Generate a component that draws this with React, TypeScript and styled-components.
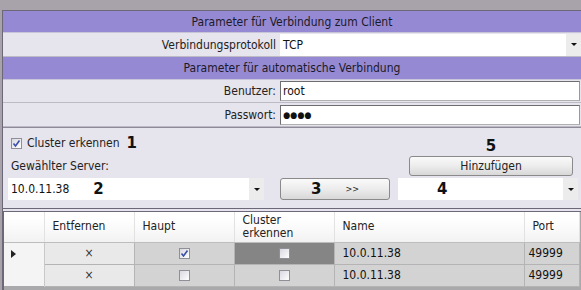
import styled, { createGlobalStyle } from "styled-components";

const GlobalStyle = createGlobalStyle`
  html, body {
    margin: 0;
    padding: 0;
    background: #a8a3ab;
  }
  body {
    font-family: "DejaVu Sans Condensed", "DejaVu Sans", sans-serif;
    font-stretch: semi-condensed;
    font-size: 12px;
    color: #1a1a1a;
  }
`;

const Page = styled.div`
  width: 581px;
  height: 290px;
  overflow: hidden;
  padding: 10px 0 0 2px;
  box-sizing: border-box;
`;

const Frame = styled.div`
  border-left: 1px solid #6c6878;
  border-top: 1px solid #6c6878;
  background: #e6e4ec;
`;

const SectionHeader = styled.div<{ h: number }>`
  height: ${(p) => p.h}px;
  background: #9589d3;
  display: flex;
  align-items: center;
  justify-content: center;
  color: #1c1a28;
  border-bottom: 1px solid #c9c5d8;
  box-sizing: border-box;
`;

const FieldRow = styled.div<{ h: number }>`
  height: ${(p) => p.h}px;
  display: grid;
  grid-template-columns: 277px 1fr;
  align-items: center;
  border-bottom: 1px solid #bdbac6;
  box-sizing: border-box;
`;

const Label = styled.div`
  text-align: right;
  padding-right: 4px;
  color: #222;
`;

const TextBox = styled.div`
  height: 20px;
  margin-right: 1px;
  background: #fff;
  border: 1px solid #6e6e6e;
  border-right-color: #9a9a9a;
  border-bottom-color: #b0b0b0;
  box-sizing: border-box;
  display: flex;
  align-items: center;
  padding-left: 2px;
  color: #111;
`;

const Dots = styled.span`
  font-size: 9px;
  letter-spacing: 0;
`;

const Select = styled.div<{ w?: number }>`
  height: 22px;
  ${(p) => (p.w ? `width: ${p.w}px;` : "")}
  background: #fff;
  display: flex;
  align-items: center;
  box-sizing: border-box;
  padding-left: 3px;
  color: #111;
`;

const SelectText = styled.span`
  flex: 1;
  display: flex;
  align-items: center;
`;

const Arrow = styled.div`
  width: 15px;
  align-self: stretch;
  background: #ececec;
  display: flex;
  align-items: center;
  justify-content: center;
  &::after {
    content: "";
    border-left: 3px solid transparent;
    border-right: 3px solid transparent;
    border-top: 3px solid #111;
  }
`;

const Panel = styled.div`
  height: 82px;
  border-top: 1px solid #8e8a98;
  border-bottom: 1px solid #6c6878;
  box-sizing: border-box;
  display: grid;
  grid-template-columns: 272px 118px 1fr;
  grid-template-rows: 22px 22px 22px;
  padding: 4px 3px 0 5px;
  row-gap: 1px;
`;

const CheckLine = styled.div`
  display: flex;
  align-items: center;
  gap: 5px;
  padding-left: 3px;
  color: #222;
`;

const Marker = styled.span<{ ml?: number }>`
  font-family: "DejaVu Sans", sans-serif;
  font-stretch: normal;
  font-weight: bold;
  font-size: 15px;
  color: #111;
  margin-left: ${(p) => p.ml ?? 0}px;
`;

const Box = styled.span`
  width: 11px;
  height: 11px;
  box-sizing: border-box;
  border: 1px solid #8f8f98;
  background: linear-gradient(135deg, #d8d8e0, #ffffff);
  display: inline-flex;
  align-items: center;
  justify-content: center;
  flex: none;
  vertical-align: middle;
`;

const Caption = styled.div`
  grid-column: 1 / 3;
  padding-left: 3px;
  color: #222;
  display: flex;
  align-items: center;
`;

const TopRight = styled.div`
  grid-column: 3;
  grid-row: 1 / 3;
  display: flex;
  flex-direction: column;
  align-items: stretch;
  justify-content: flex-end;
  padding: 0 5px 1px 11px;
  gap: 1px;
  text-align: center;
`;

const Button = styled.div<{ w?: number; h: number }>`
  ${(p) => (p.w ? `width: ${p.w}px;` : "")}
  height: ${(p) => p.h}px;
  box-sizing: border-box;
  border: 1px solid #8a8a8a;
  border-radius: 3px;
  background: linear-gradient(#fafafa, #ececec 50%, #d8d8d8);
  display: flex;
  align-items: center;
  justify-content: center;
  color: #222;
`;

const Chevrons = styled.span`
  margin-left: 24px;
  font-size: 9px;
`;

const TableWrap = styled.div`
  margin-top: 2px;
  border-left: 1px solid #6c6878;
  border-top: 1px solid #6c6878;
  background: #a9a9ab;
  height: 80px;
`;

const Grid = styled.table`
  border-collapse: collapse;
  table-layout: fixed;
  width: 575px;
`;

const Th = styled.th<{ w: number }>`
  box-sizing: border-box;
  width: ${(p) => p.w}px;
  height: 30px;
  padding: 0 0 0 8px;
  text-align: left;
  font-weight: normal;
  line-height: 13px;
  color: #222;
  background: linear-gradient(#ffffff 20%, #f2f2f2);
  border-right: 1px solid #e2e2e2;
  border-bottom: 1px solid #bdbdbd;
`;

const Td = styled.td<{ bg: string; center?: boolean }>`
  box-sizing: border-box;
  height: 22px;
  padding: 0 0 0 ${(p) => (p.center ? 0 : 8)}px;
  background: ${(p) => p.bg};
  text-align: ${(p) => (p.center ? "center" : "left")};
  border-right: 1px solid #b4b4b4;
  border-bottom: 1px solid #b4b4b4;
  color: #111;
`;

const RowHead = styled.td`
  box-sizing: border-box;
  height: 22px;
  background: #f4f4f4;
  border-right: 1px solid #c8c8c8;
  padding: 0 0 0 7px;
`;

const Pointer = styled.span`
  display: inline-block;
  border-top: 4px solid transparent;
  border-bottom: 4px solid transparent;
  border-left: 5px solid #222;
  vertical-align: middle;
`;

const Cross = styled.span`
  color: #333;
`;

function Tick() {
  return (
    <svg width="9" height="9" viewBox="0 0 9 9">
      <path d="M1.5 4.5 L3.5 7 L7.5 1.5" fill="none" stroke="#3b4fa8" strokeWidth="1.6" />
    </svg>
  );
}

const rows = [
  { pointer: true, main: true, clusterBg: "#858585" },
  { pointer: false, main: false, clusterBg: "#d3d3d3" },
];

export default function App() {
  return (
    <Page>
      <GlobalStyle />
      <Frame>
        <SectionHeader h={22}>Parameter für Verbindung zum Client</SectionHeader>
        <FieldRow h={24}>
          <Label>Verbindungsprotokoll</Label>
          <Select>
            <SelectText>TCP</SelectText>
            <Arrow />
          </Select>
        </FieldRow>
        <SectionHeader h={23}>Parameter für automatische Verbindung</SectionHeader>
        <FieldRow h={23}>
          <Label>Benutzer:</Label>
          <TextBox>root</TextBox>
        </FieldRow>
        <FieldRow h={24}>
          <Label>Passwort:</Label>
          <TextBox>
            <Dots>●●●●</Dots>
          </TextBox>
        </FieldRow>
        <Panel>
          <CheckLine>
            <Box>
              <Tick />
            </Box>
            Cluster erkennen
            <Marker ml={2}>1</Marker>
          </CheckLine>
          <div />
          <TopRight>
            <Marker>5</Marker>
            <Button h={20}>Hinzufügen</Button>
          </TopRight>
          <Caption>Gewählter Server:</Caption>
          <Select w={256}>
            <SelectText>
              10.0.11.38
              <Marker ml={24}>2</Marker>
            </SelectText>
            <Arrow />
          </Select>
          <Button w={110} h={22}>
            <Marker>3</Marker>
            <Chevrons>&gt;&gt;</Chevrons>
          </Button>
          <Select>
            <SelectText>
              <Marker ml={36}>4</Marker>
            </SelectText>
            <Arrow />
          </Select>
        </Panel>
        <TableWrap>
          <Grid>
            <thead>
              <tr>
                <Th w={40} />
                <Th w={90}>Entfernen</Th>
                <Th w={100}>Haupt</Th>
                <Th w={100}>
                  Cluster
                  <br />
                  erkennen
                </Th>
                <Th w={190}>Name</Th>
                <Th w={55}>Port</Th>
              </tr>
            </thead>
            <tbody>
              {rows.map((r, i) => (
                <tr key={i}>
                  <RowHead>{r.pointer && <Pointer />}</RowHead>
                  <Td bg="#e9e9e9" center>
                    <Cross>×</Cross>
                  </Td>
                  <Td bg="#d3d3d3" center>
                    <Box>{r.main && <Tick />}</Box>
                  </Td>
                  <Td bg={r.clusterBg} center>
                    <Box />
                  </Td>
                  <Td bg="#d3d3d3">10.0.11.38</Td>
                  <Td bg="#d3d3d3" style={{ paddingLeft: 4 }}>49999</Td>
                </tr>
              ))}
            </tbody>
          </Grid>
        </TableWrap>
      </Frame>
    </Page>
  );
}
